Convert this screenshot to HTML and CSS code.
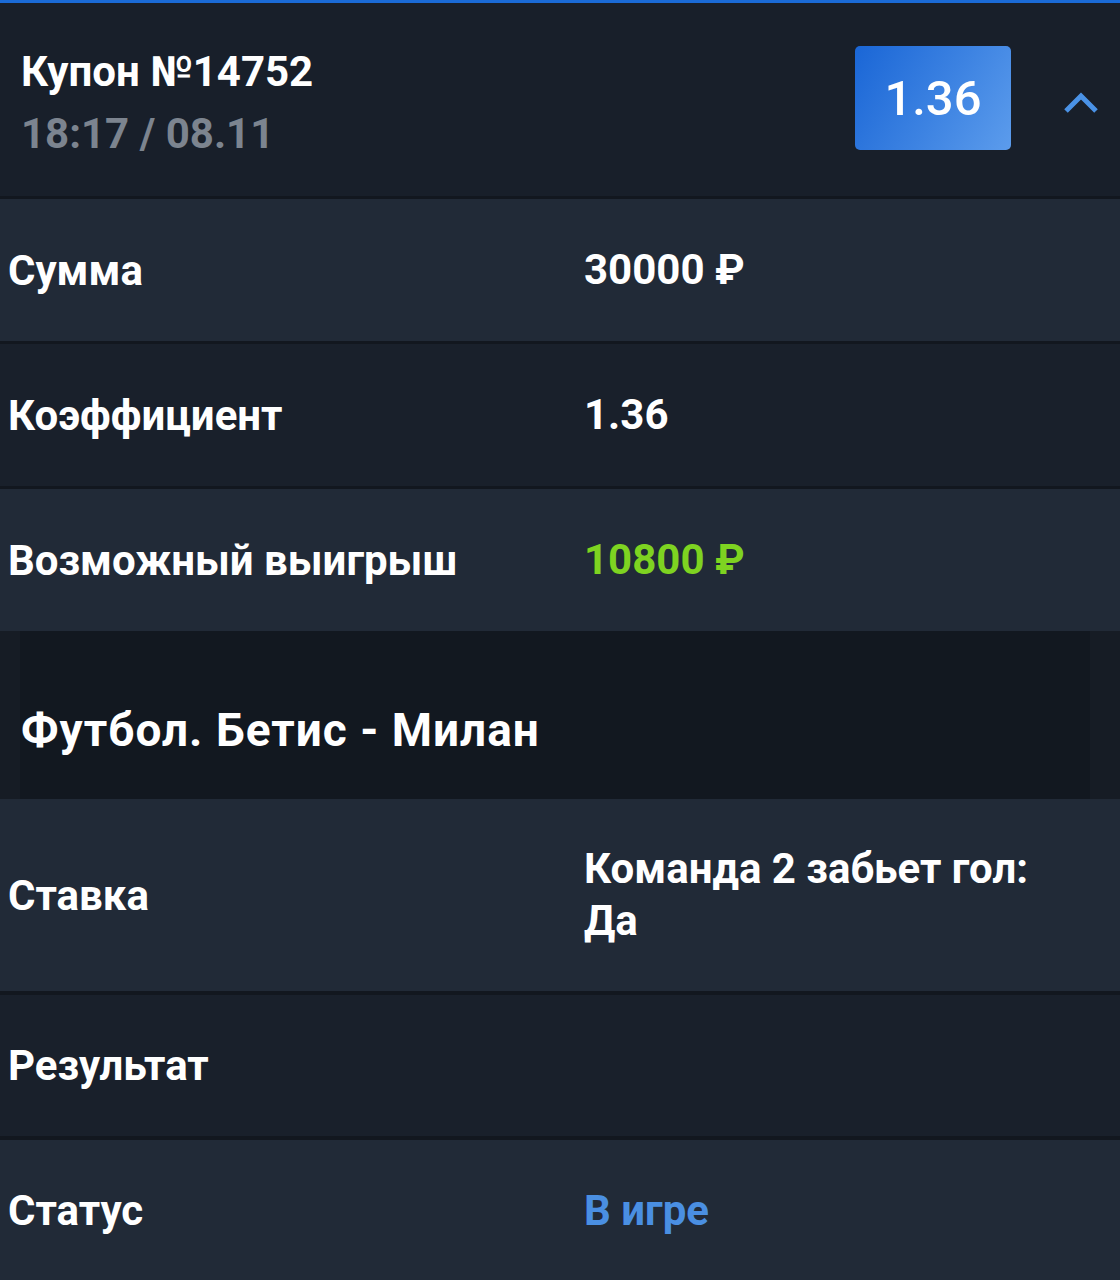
FILE: index.html
```html
<!DOCTYPE html>
<html lang="ru">
<head>
<meta charset="utf-8">
<title>Купон</title>
<link rel="stylesheet" href="styles.css">
</head>
<body>
<div class="coupon">
  <header class="head">
    <div class="head-text">
      <div class="title">Купон №14752</div>
      <div class="date">18:17 / 08.11</div>
    </div>
    <div class="badge">1.36</div>
    <svg class="chevron" width="36" height="24" viewBox="0 0 36 24"><path d="M3 21 L18 6 L33 21" fill="none" stroke="#4a92e6" stroke-width="5"/></svg>
  </header>
  <div class="row light"><div class="label">Сумма</div><div class="value">30000 ₽</div></div>
  <div class="row dark"><div class="label">Коэффициент</div><div class="value">1.36</div></div>
  <div class="row light"><div class="label">Возможный выигрыш</div><div class="value green">10800 ₽</div></div>
  <div class="event"><div class="event-inner">Футбол. Бетис - Милан</div></div>
  <div class="row light tall"><div class="label">Ставка</div><div class="value">Команда 2 забьет гол:<br>Да</div></div>
  <div class="row dark sep"><div class="label">Результат</div><div class="value"></div></div>
  <div class="row light sep"><div class="label">Статус</div><div class="value blue">В игре</div></div>
</div>
</body>
</html>
```
FILE: styles.css
```css
* { box-sizing: border-box; }
html, body { margin: 0; padding: 0; background: #19202b; }
body { font-family: Roboto, "Noto Sans", sans-serif; color: #fff; }
.coupon { width: 1120px; border-top: 3px solid #1a6ad6; }
.head {
  height: 193px;
  background: #181f2a;
  display: flex;
  align-items: center;
  padding: 0 21px 0 21px;
}
.head-text { flex: 1; padding-top: 8px; }
.title { font-size: 42px; font-weight: 700; line-height: 60px; }
.date { font-size: 42px; font-weight: 700; line-height: 64px; color: #7c848f; }
.badge {
  width: 156px; height: 104px;
  margin-top: -3px;
  border-radius: 5px;
  background: linear-gradient(120deg, #1a66d6 0%, #3d83e2 55%, #5c9cec 100%);
  display: flex; align-items: center; justify-content: center;
  font-size: 49px; font-weight: 500;
}
.chevron { margin-left: 52px; margin-top: 4px; }
.row {
  display: flex; align-items: center;
  height: 145px;
  border-top: 3px solid #12171f;
  padding-left: 8px;
  font-size: 42px; font-weight: 700;
}
.row.light { background: #212a37; }
.row.dark { background: #19202b; }
.row.tall { height: 192px; border-top: none; }
.row.sep { border-top: 4px solid #12171f; }
.label { width: 576px; }
.value { line-height: 52px; }
.green { color: #7ed321; }
.blue { color: #4a8fe2; }
.event {
  height: 168px;
  background: #161c25;
  padding: 0 30px 0 20px;
}
.event-inner {
  height: 100%;
  background: #121820;
  display: flex; align-items: center;
  padding-top: 30px;
  padding-left: 1px;
  font-size: 46px; font-weight: 700; letter-spacing: 1px;
}
```
